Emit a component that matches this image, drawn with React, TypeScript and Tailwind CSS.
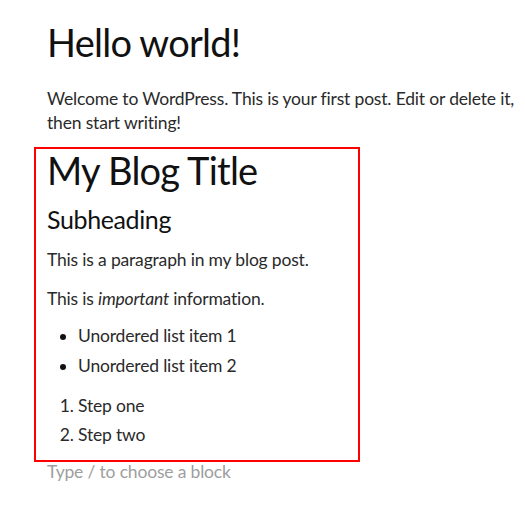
import React from "react";

export default function App() {
  return (
    <div className="min-h-[511px] w-[525px] bg-white font-['Lato',sans-serif]">
      <div className="flex flex-col">
        <h1 className="ml-[47px] mt-[19px] text-[38px] leading-[46px] tracking-[-0.02em] text-[#111]">Hello world!</h1>
        <p className="ml-[47px] mt-[22px] w-[472px] text-[17.5px] leading-[24px] tracking-[-0.01em] text-[#2a2a2a]">
          Welcome to WordPress. This is your first post. Edit or delete it, then start writing!
        </p>

        {/* selected group block */}
        <div className="ml-[34px] mt-[12px] w-[326px] border-2 border-[#ff0000] pb-[11px] pl-[11px] pt-[2px] text-[17.5px] tracking-[-0.01em] text-[#2a2a2a]">
          <h2 className="text-[38px] leading-[38px] tracking-[-0.02em] text-[#111]">My Blog Title</h2>
          <h3 className="mt-[15px] text-[25px] leading-[30px] tracking-[-0.015em] text-[#111]">Subheading</h3>
          <p className="mt-[12px] leading-[27px]">This is a paragraph in my blog post.</p>
          <p className="mt-[12px] leading-[27px]">
            This is <em>important</em> information.
          </p>
          <ul className="mt-[9px] list-disc pl-[31px] leading-[30px] marker:text-[#111]">
            <li>Unordered list item 1</li>
            <li>Unordered list item 2</li>
          </ul>
          <ol className="mt-[9.5px] list-decimal pl-[31px] leading-[29px]">
            <li>Step one</li>
            <li>Step two</li>
          </ol>
        </div>

        <p className="ml-[47px] mt-[1px] text-[17.5px] leading-[18px] tracking-[-0.01em] text-[#9e9e9e]">
          Type / to choose a block
        </p>
      </div>
    </div>
  );
}
